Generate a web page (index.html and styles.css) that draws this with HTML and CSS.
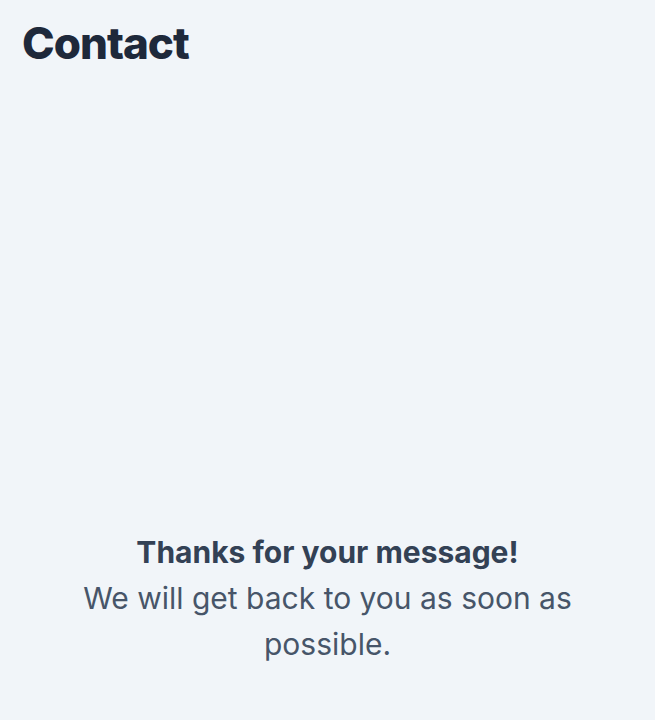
FILE: index.html
```html
<!DOCTYPE html>
<html lang="en">
<head>
<meta charset="utf-8">
<title>Contact</title>
<link rel="stylesheet" href="styles.css">
</head>
<body>
<main class="page">
  <h1 class="title">Contact</h1>
  <section class="thanks">
    <p class="thanks-head">Thanks for your message!</p>
    <p class="thanks-text">We will get back to you as soon as possible.</p>
  </section>
</main>
</body>
</html>
```

FILE: styles.css
```css
html, body {
  margin: 0;
  padding: 0;
  background: #f1f5f9;
}
body {
  font-family: Inter, "Noto Sans", sans-serif;
  min-height: 720px;
}
.page {
  padding: 18px 22px 0;
}
.title {
  margin: 0;
  font-size: 44px;
  line-height: 50px;
  font-weight: 800;
  letter-spacing: -1px;
  color: #1e293b;
}
.thanks {
  margin: 461px auto 0;
  max-width: 540px;
  text-align: center;
}
.thanks p {
  margin: 0;
  font-size: 30px;
  line-height: 46px;
}
.thanks-head {
  font-weight: 700;
  color: #334155;
}
.thanks-text {
  color: #475569;
}
```
